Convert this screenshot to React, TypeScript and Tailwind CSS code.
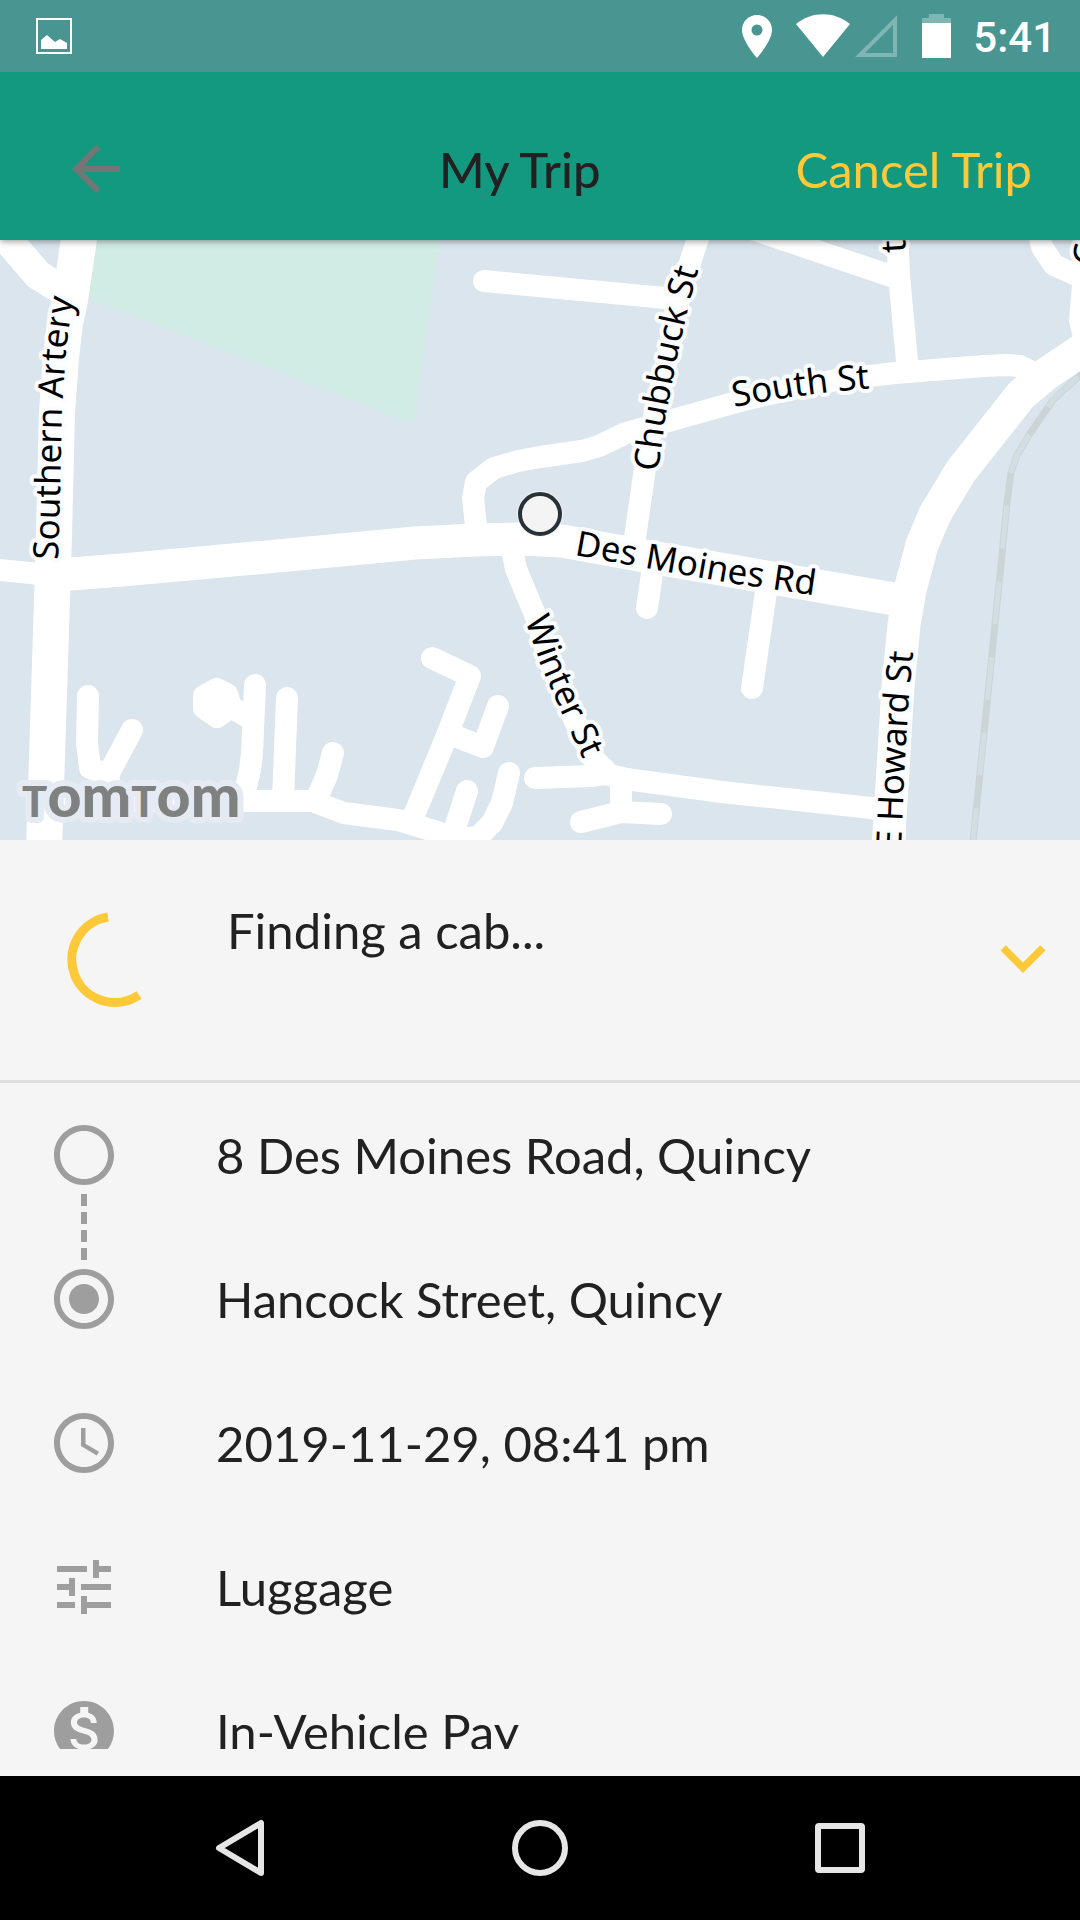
import React, { useState } from 'react';
import {
  MdAccessTime,
  MdArrowBack,
  MdExpandMore,
  MdMonetizationOn,
  MdRadioButtonChecked,
  MdRadioButtonUnchecked,
  MdTune,
} from 'react-icons/md';

const TRIP_DETAILS = [
  { id: 'pickup', icon: MdRadioButtonUnchecked, text: '8 Des Moines Road, Quincy', connected: true },
  { id: 'dropoff', icon: MdRadioButtonChecked, text: 'Hancock Street, Quincy' },
  { id: 'time', icon: MdAccessTime, text: '2019-11-29, 08:41 pm' },
  { id: 'options', icon: MdTune, text: 'Luggage' },
  { id: 'payment', icon: MdMonetizationOn, text: 'In-Vehicle Pay' },
];

// road centre lines, grouped by stroke width
const MAIN_ROADS = [
  'M54 575 L70 574 L122 570 L277 556 L415 543 L475 540 L520 539 L562 541 L650 557 L900 600',
  'M1100 338 L1076 354 L1046 374 L1021 395 L961 471 L935 514 L922 545 L910 590 L904 625 L898 687 L888 850',
];

const SIDE_ROADS = [
  'M-10 569 L40 574',
  'M484 281 L676 299',
  'M700 232 L687 272 L676 310 L666 365 L655 412 L645 468 L634 545',
  'M654 560 L647 608',
  'M767 585 L752 688',
  'M477 535 L473 498 L476 482 L494 468 L518 461 L540 457 L582 451 L599 446 L626 433 L733 403 L760 396 L836 380 L895 373 L984 366 L1007 365 L1020 366 L1040 376',
  'M897 232 L899 275 L908 372',
  'M740 225 L891 276',
  'M1038 230 L1042 247 L1054 265 L1085 279',
  'M1083 285 L1080 320 L1086 345',
  'M511 545 L516 569 L536 617 L549 662 L578 728 L592 757 L607 772',
  'M535 778 L592 776 L604 774 L633 780 L722 792 L890 810',
  'M621 785 L621 812',
  'M581 822 L621 812 L661 814',
  'M50 801 L312 801 L344 813 L398 820 L434 831 L458 839 L478 837 L492 823 L502 803 L509 773',
  'M467 791 L455 828',
  'M432 658 L470 676 L446 738 L414 815',
  'M452 735 L483 747 L498 706',
  'M88 696 L87 743 L90 768 L103 773 L109 780 L110 800',
  'M132 730 L108 775',
  'M255 685 L252 753 L250 770 L244 795',
  'M287 698 L283 800',
  'M333 753 L327 775 L317 798',
  'M226 704 L246 716',
  'M217 689 L227 694 L231 707 L217 717 L204 708 L204 696 Z',
];

const RAILWAY = 'M973 842 L1003 545 L1007 502 L1011 473 L1017 455 L1031 432 L1053 400 L1090 366';

const STREET_LABELS = [
  { name: 'Southern Artery', id: 'southern', d: 'M58 560 L60 500 L62 412 L66 350 L72 305 L86 240' },
  { name: 'Chubbuck St', id: 'chubbuck', d: 'M658 472 L665 420 L676 362 L690 300 L708 235' },
  { name: 'South St', id: 'south', d: 'M734 407 L790 397 L840 391 L920 384' },
  { name: 'Des Moines Rd', id: 'desmoines', d: 'M574 555 L640 567 L730 583 L860 602' },
  { name: 'Winter St', id: 'winter', d: 'M525 620 L542 668 L562 714 L590 774' },
  { name: 'E Howard St', id: 'howard', d: 'M901 850 L904 780 L908 710 L914 640 L920 560' },
  { name: 't', id: 'north', d: 'M906 252 L904 220' },
  { name: 'C', id: 'east', d: 'M1098 266 L1101 220' },
];

function StreetMap() {
  return (
    <svg
      role="img"
      aria-label="Map of the pickup area"
      className="block h-[600px] w-full shrink-0 bg-[#dae5ed]"
      viewBox="0 240 1080 600"
      preserveAspectRatio="xMidYMid slice"
    >
      <path d="M97 236 L88 298 L414 424 L440 236 Z" fill="#d1ece4" />
      <path d={RAILWAY} fill="none" stroke="#cbd4d7" strokeWidth="7" />
      <path d={RAILWAY} fill="none" stroke="#d1dfe3" strokeWidth="5" strokeDasharray="43 33" strokeDashoffset="9" />

      <g fill="none" stroke="#fff" strokeLinecap="round" strokeLinejoin="round">
        {SIDE_ROADS.map((d) => (
          <path key={d} d={d} strokeWidth="22" />
        ))}
        {MAIN_ROADS.map((d) => (
          <path key={d} d={d} strokeWidth="33" />
        ))}
        <path d="M-10 219 L38 275 L64 291" strokeWidth="30" />
        <path d="M80 232 L70 300 L65 323 L61 358 L57 412 L54 535 L52 600 L44 850" strokeWidth="36" />
      </g>

      {/* Pickup marker */}
      <circle cx="540" cy="514" r="23" fill="#f4f4f4" />
      <circle cx="540" cy="514" r="20" fill="#f4f4f4" stroke="#263238" strokeWidth="4" />

      <g
        className="font-['Noto_Sans',sans-serif] text-[35px]"
        fill="#000"
        stroke="#fafcfd"
        strokeWidth="8"
        strokeLinejoin="round"
        paintOrder="stroke"
      >
        {STREET_LABELS.map(({ name, id, d }) => (
          <React.Fragment key={id}>
            <path id={id} d={d} fill="none" stroke="none" />
            <text>
              <textPath href={`#${id}`}>{name}</textPath>
            </text>
          </React.Fragment>
        ))}
      </g>

      {/* Map provider */}
      <text
        x="22"
        y="817"
        className="font-['Lato',sans-serif] font-black"
        fill="#7f8181"
        stroke="#e6ebf3"
        strokeWidth="12"
        strokeLinejoin="round"
        paintOrder="stroke"
      >
        <tspan fontSize="42">T</tspan>
        <tspan fontSize="59">om</tspan>
        <tspan fontSize="42">T</tspan>
        <tspan fontSize="59">om</tspan>
      </text>
    </svg>
  );
}

function StatusBar() {
  return (
    <div className="flex h-[72px] shrink-0 items-center bg-[#489592] pr-6 pl-9 text-white">
      <svg className="h-9 w-9" viewBox="0 0 36 36" fill="none">
        <rect x="1" y="1" width="34" height="34" stroke="currentColor" strokeWidth="2" />
        <path d="M5 31V22L11 17L19 24L24 21L31 25V31Z" fill="currentColor" />
      </svg>
      <div className="ml-auto flex items-center">
        <svg className="h-11 w-8" viewBox="0 0 32 44" fill="currentColor" fillRule="evenodd">
          <path d="M16 1C7.600 1 1 7.700 1 16C1 27 16 44 16 44C16 44 31 27 31 16C31 7.700 24.400 1 16 1ZM16 10.500A5.500 5.500 0 1 1 16 21.500A5.500 5.500 0 1 1 16 10.500Z" />
        </svg>
        <svg className="ml-[23px] h-11 w-[54px]" viewBox="0 0 54 44" fill="currentColor">
          <path d="M0 10C16 -3 38 -3 54 10L27 43Z" />
        </svg>
        <svg className="ml-1 h-11 w-11" viewBox="0 0 44 44" fill="none" stroke="currentColor" opacity="0.3">
          <path d="M6 41L41 6V41Z" strokeWidth="4" />
        </svg>
        <svg className="ml-6 h-11 w-[29px]" viewBox="0 0 29 44" fill="currentColor">
          <path d="M7 0H22V4H29V9H0V4H7Z" opacity="0.3" />
          <path d="M0 9H29V44H0Z" />
        </svg>
        <span className="ml-[22px] pt-[3px] font-['Roboto',sans-serif] text-[42px] leading-[48px] font-medium">5:41</span>
      </div>
    </div>
  );
}

function Header() {
  return (
    <header className="flex h-[168px] shrink-0 items-center bg-[#129980] pt-[26px] pr-12 pl-[60px]">
      <button type="button" aria-label="Back" className="text-[#757575]">
        <MdArrowBack size={72} />
      </button>
      <h1 className="flex-1 pl-28 text-center font-medium text-[#212121]">My Trip</h1>
      <button type="button" className="text-[#fdc938]">
        Cancel Trip
      </button>
    </header>
  );
}

function TripStatus({ expanded, onToggle }: { expanded: boolean; onToggle: () => void }) {
  return (
    <section className="flex h-[243px] shrink-0 items-center border-b-[3px] border-[#e0e0e0] pr-3 pl-[66px]">
      <svg className="h-24 w-24" viewBox="0 0 96 96" fill="none">
        <path d="M42 5A43 43 0 1 0 73 83" stroke="#fdc938" strokeWidth="9" />
      </svg>
      <p className="flex-1 pb-[60px] pl-[65px]">Finding a cab...</p>
      <button type="button" aria-label="Trip details" aria-expanded={expanded} onClick={onToggle} className="pb-1 text-[#fdc938]">
        <MdExpandMore size={90} />
      </button>
    </section>
  );
}

function TripDetails() {
  return (
    <ul className="mb-[27px] min-h-0 flex-1 overflow-hidden">
      {TRIP_DETAILS.map(({ id, icon: Icon, text, connected }) => (
        <li key={id} className="relative flex h-36 items-center pl-12">
          <Icon size={72} className="shrink-0 text-[#9e9e9e]" />
          {connected && (
            <svg className="absolute top-[111px] left-[81px] h-[66px] w-[6px]" viewBox="0 0 6 66">
              <path d="M3 0V66" stroke="#9e9e9e" strokeWidth="6" strokeDasharray="12 6" />
            </svg>
          )}
          <span className="pl-24">{text}</span>
        </li>
      ))}
    </ul>
  );
}

function NavigationBar() {
  return (
    <nav className="flex h-36 shrink-0 items-center bg-black px-[90px] text-[#e6e6e6]">
      <button type="button" aria-label="Back" className="flex flex-1 justify-center">
        <svg className="h-[60px] w-[60px]" viewBox="0 0 60 60" fill="none" stroke="currentColor" strokeWidth="6" strokeLinejoin="round">
          <path d="M51 5V55L9 30Z" />
        </svg>
      </button>
      <button type="button" aria-label="Home" className="flex flex-1 justify-center">
        <svg className="h-[60px] w-[60px]" viewBox="0 0 60 60" fill="none" stroke="currentColor" strokeWidth="6">
          <circle cx="30" cy="30" r="25" />
        </svg>
      </button>
      <button type="button" aria-label="Recent apps" className="flex flex-1 justify-center">
        <svg className="h-[60px] w-[60px]" viewBox="0 0 60 60" fill="none" stroke="currentColor" strokeWidth="6">
          <rect x="8" y="8" width="44" height="44" rx="1" strokeLinejoin="round" />
        </svg>
      </button>
    </nav>
  );
}

export default function App() {
  const [expanded, setExpanded] = useState(true);

  return (
    <div className="flex h-screen flex-col overflow-hidden bg-[#f5f5f5] font-['Lato',sans-serif] text-[49px] leading-[60px] text-[#212121]">
      <div className="relative z-10 shrink-0 shadow-[0_1px_7px_rgba(0,0,0,0.45)]">
        <StatusBar />
        <Header />
      </div>
      <StreetMap />
      <TripStatus expanded={expanded} onToggle={() => setExpanded(!expanded)} />
      {expanded ? <TripDetails /> : <div className="flex-1" />}
      <NavigationBar />
    </div>
  );
}
